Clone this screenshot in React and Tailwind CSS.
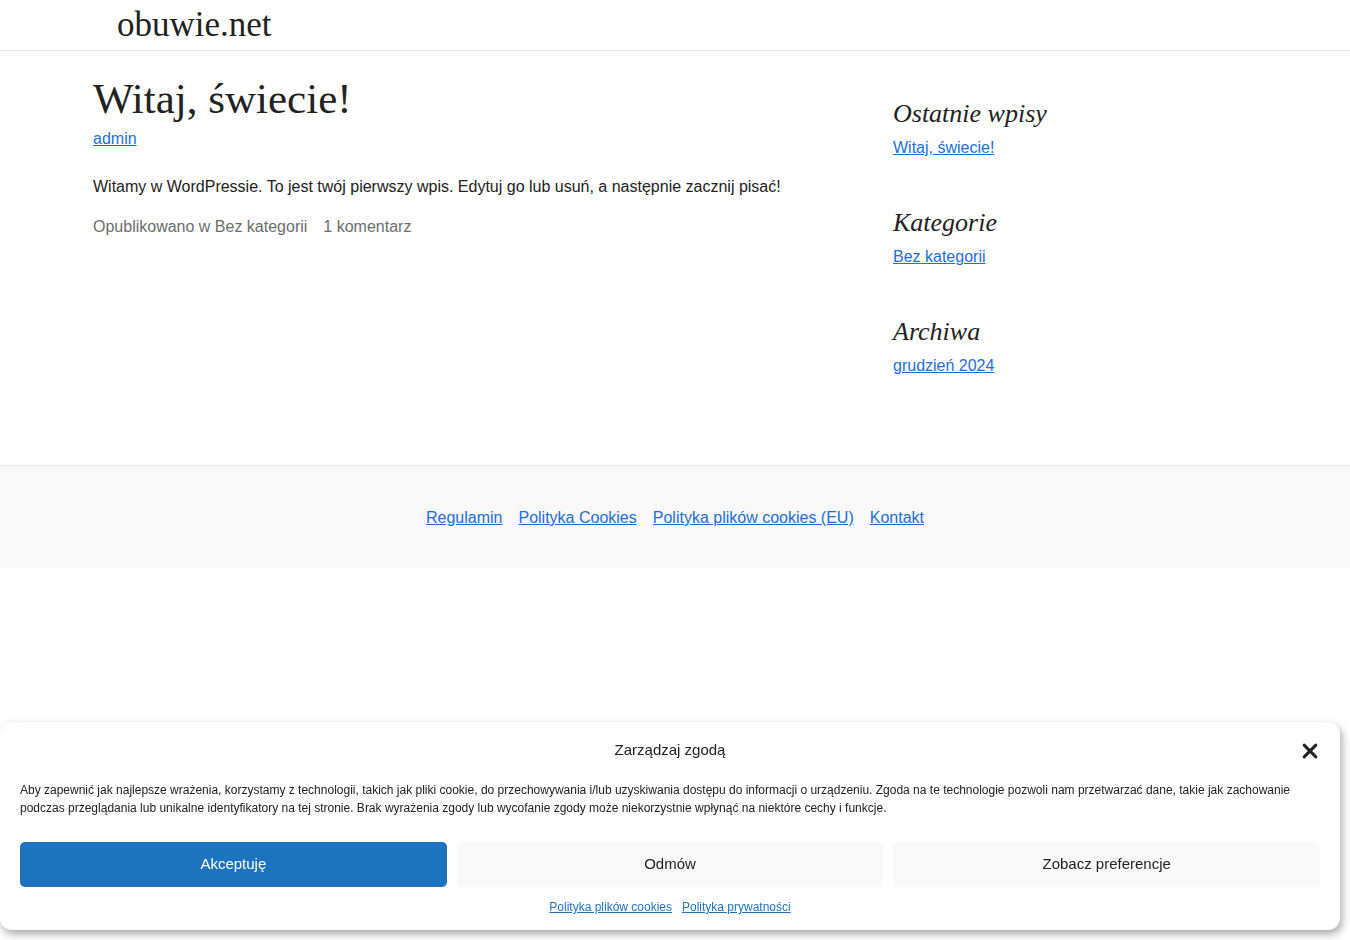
import React from "react";

const serif = { fontFamily: '"Liberation Serif", "DejaVu Serif", serif' };

const CloseIcon = () => (
  <svg viewBox="0 0 24 24" width="20" height="20" fill="none" stroke="#222" strokeWidth="3.6" strokeLinecap="round">
    <line x1="5" y1="5" x2="19" y2="19" />
    <line x1="19" y1="5" x2="5" y2="19" />
  </svg>
);

const SidebarWidget = ({ title, link }) => (
  <div className="mb-[48px]">
    <h2 className="text-[26px] italic leading-[32px] text-[#222]" style={serif}>
      {title}
    </h2>
    <a href="#" className="block mt-[7px] text-[16px] leading-[22px] text-[#1b6fde] underline">
      {link}
    </a>
  </div>
);

const App = () => {
  return (
    <div className="min-h-[940px] bg-white text-[#222]" style={{ fontFamily: '"Liberation Sans", Arial, sans-serif' }}>
      {/* Header */}
      <header className="h-[51px] border-b border-[#e5e5e5] pl-[117px] pt-[4px]">
        <div className="text-[35px] leading-[42px] text-[#222]" style={serif}>
          obuwie.net
        </div>
      </header>

      {/* Content */}
      <div className="flex pl-[93px] pt-[22px] h-[414px]">
        <main className="w-[800px]">
          <h1 className="text-[43px] leading-[52px] text-[#222]" style={serif}>
            Witaj, świecie!
          </h1>
          <a href="#" className="block mt-[3px] text-[16px] leading-[22px] text-[#1b6fde] underline">
            admin
          </a>
          <p className="mt-[26px] text-[16px] leading-[22px] text-[#222]">
            Witamy w WordPressie. To jest twój pierwszy wpis. Edytuj go lub usuń, a następnie zacznij pisać!
          </p>
          <div className="mt-[18px] flex gap-4 text-[16px] leading-[22px] text-[#6d6d6d]">
            <span>Opublikowano w Bez kategorii</span>
            <span>1 komentarz</span>
          </div>
        </main>
        <aside className="pt-[25px]">
          <SidebarWidget title="Ostatnie wpisy" link="Witaj, świecie!" />
          <SidebarWidget title="Kategorie" link="Bez kategorii" />
          <SidebarWidget title="Archiwa" link="grudzień 2024" />
        </aside>
      </div>

      {/* Footer */}
      <footer className="h-[103px] border-t border-[#e5e5e5] bg-[#f9f9f9] flex items-center justify-center gap-4 pt-[2px]">
        {["Regulamin", "Polityka Cookies", "Polityka plików cookies (EU)", "Kontakt"].map((l) => (
          <a key={l} href="#" className="text-[16px] leading-[22px] text-[#1b6fde] underline">
            {l}
          </a>
        ))}
      </footer>

      {/* Cookie banner */}
      <div className="fixed left-0 bottom-[10px] w-[1340px] h-[208px] bg-white rounded-xl shadow-[2px_4px_8px_rgba(0,0,0,0.35)] px-5 pt-[17px]">
        <div className="relative flex justify-center">
          <span className="text-[15px] leading-[22px] text-[#222]">Zarządzaj zgodą</span>
          <button className="absolute right-0 top-[2px]">
            <CloseIcon />
          </button>
        </div>
        <p className="mt-[20px] text-[12px] leading-[18px] text-[#222] pr-5">
          Aby zapewnić jak najlepsze wrażenia, korzystamy z technologii, takich jak pliki cookie, do przechowywania i/lub uzyskiwania dostępu do informacji o urządzeniu. Zgoda na te technologie pozwoli nam przetwarzać dane, takie jak zachowanie podczas przeglądania lub unikalne identyfikatory na tej stronie. Brak wyrażenia zgody lub wycofanie zgody może niekorzystnie wpłynąć na niektóre cechy i funkcje.
        </p>
        <div className="mt-[25px] flex gap-[10px]">
          <button className="flex-1 h-[45px] rounded-[5px] bg-[#1e73be] text-white text-[15px]">Akceptuję</button>
          <button className="flex-1 h-[45px] rounded-[5px] bg-[#f9f9f9] text-[#222] text-[15px]">Odmów</button>
          <button className="flex-1 h-[45px] rounded-[5px] bg-[#f9f9f9] text-[#222] text-[15px]">Zobacz preferencje</button>
        </div>
        <div className="mt-[11px] flex justify-center gap-[10px] text-[12px] leading-[18px]">
          <a href="#" className="text-[#1e73be] underline">Polityka plików cookies</a>
          <a href="#" className="text-[#1e73be] underline">Polityka prywatności</a>
        </div>
      </div>
    </div>
  );
};

export default App;
